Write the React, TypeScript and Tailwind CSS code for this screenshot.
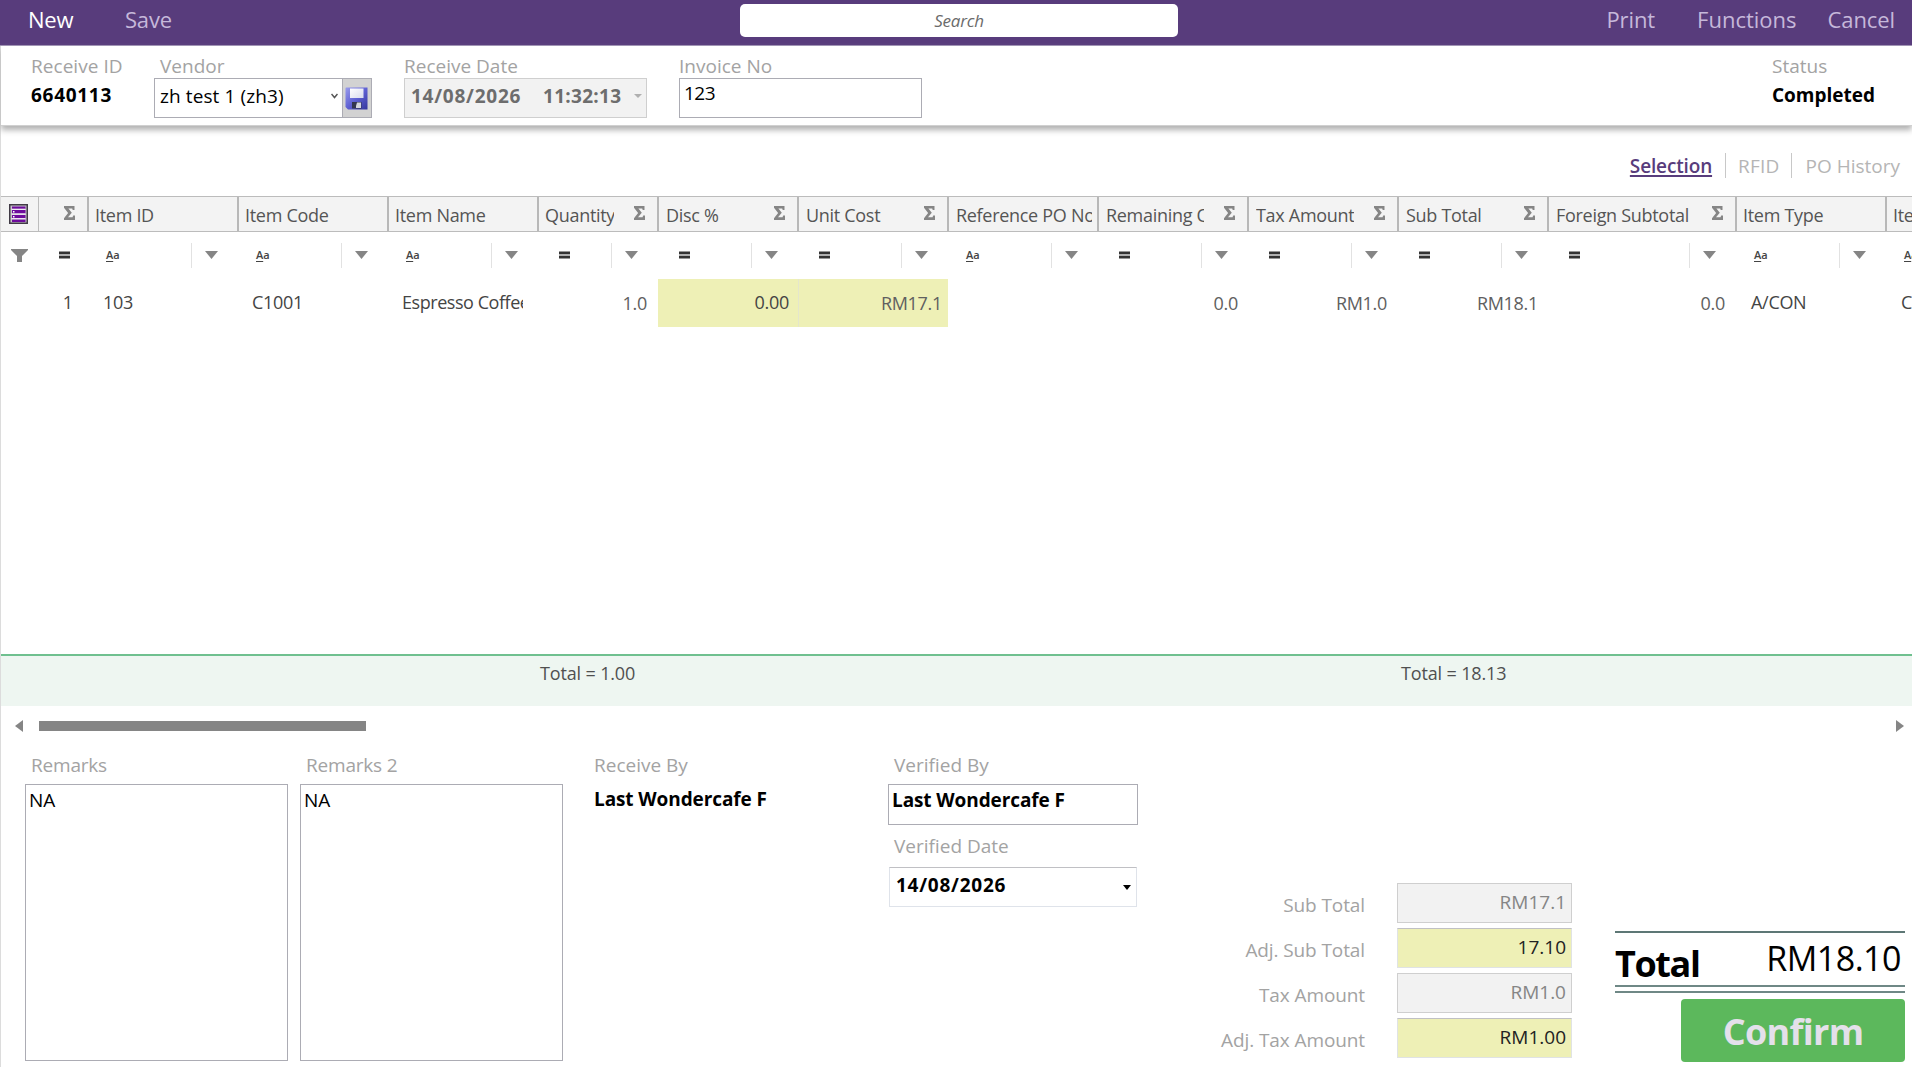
import clsx from "clsx";

type FilterKind = "text" | "number";

interface Column {
  title: string;
  width: string;
  filter: FilterKind;
  sum?: boolean;
  titleClass?: string;
  value?: string;
  valueClass?: string;
}

const columns: Column[] = [
  { title: "Item ID", width: "w-[150px]", filter: "text", titleClass: "pl-[6px]", value: "103", valueClass: "pl-[14px]" },
  { title: "Item Code", width: "w-[150px]", filter: "text", titleClass: "pl-[6px]", value: "C1001", valueClass: "pl-[13px]" },
  { title: "Item Name", width: "w-[150px]", filter: "text", titleClass: "pl-[6px]", value: "Espresso Coffee", valueClass: "pl-[13px] mr-[16px] tracking-[-0.45px]" },
  { title: "Quantity", width: "w-[120px]", filter: "number", sum: true, titleClass: "pl-[6px]", value: "1.0", valueClass: "justify-end pr-3 pt-px text-[#606060]" },
  { title: "Disc %", width: "w-[140px]", filter: "number", sum: true, value: "0.00", valueClass: "justify-end pr-[9px] -ml-px mr-px bg-[#eef0b6]" },
  { title: "Unit Cost", width: "w-[150px]", filter: "number", sum: true, value: "RM17.1", valueClass: "justify-end pr-[6px] pt-px -ml-px mr-px border-l border-[#e4e6cc] bg-[#eef0b6] text-[#606060]" },
  { title: "Reference PO No", width: "w-[150px]", filter: "text" },
  { title: "Remaining Qty", width: "w-[150px]", filter: "number", sum: true, value: "0.0", valueClass: "justify-end pr-[11px] pt-px text-[#606060]" },
  { title: "Tax Amount", width: "w-[150px]", filter: "number", sum: true, value: "RM1.0", valueClass: "justify-end pr-3 pt-px text-[#606060]" },
  { title: "Sub Total", width: "w-[150px]", filter: "number", sum: true, value: "RM18.1", valueClass: "justify-end pr-[11px] pt-px text-[#606060]" },
  { title: "Foreign Subtotal", width: "w-[188px]", filter: "number", sum: true, value: "0.0", valueClass: "justify-end pr-3 pt-px text-[#606060]" },
  { title: "Item Type", width: "w-[150px]", filter: "text", titleClass: "pl-[6px]", value: "A/CON", valueClass: "pl-[14px]" },
  { title: "Item Category", width: "w-[150px]", filter: "text", titleClass: "pl-[6px]", value: "Coffee", valueClass: "pl-[14px]" },
];

const amounts = [
  { label: "Sub Total", value: "RM17.1", editable: false },
  { label: "Adj. Sub Total", value: "17.10", editable: true },
  { label: "Tax Amount", value: "RM1.0", editable: false },
  { label: "Adj. Tax Amount", value: "RM1.00", editable: true },
];

function Sigma() {
  return (
    <svg className="w-[11px] h-[14px] shrink-0" viewBox="0 0 11 14" fill="#858585">
      <path d="M0 0H10.500V4H8.700L8.200 2.400H4.400L7.800 6.800L4 11.300H8.500L9.200 9.600H11V14H0V12.200L4.100 7.100L0 1.800z" />
    </svg>
  );
}

function EqualsIcon() {
  return (
    <svg className="w-[11px] h-[8px] shrink-0" viewBox="0 0 11 8">
      <path d="M0 3h11v2H0z" fill="#b0b0b0" />
      <path d="M0 .5h11v2.500H0zM0 5h11v2.500H0z" fill="#333" />
    </svg>
  );
}

function ChevronFill() {
  return (
    <svg className="w-[13px] h-[8px] shrink-0" viewBox="0 0 13 8">
      <path d="M0 0h13L6.500 8z" fill="#858585" />
    </svg>
  );
}

function FunnelIcon() {
  return (
    <svg className="w-[17px] h-[13px]" viewBox="0 0 17 13">
      <path d="M0 0h17v1L11 7v6H6V7L0 1z" fill="#858585" />
    </svg>
  );
}

function ChooserIcon() {
  return (
    <svg className="w-[19px] h-[20px]" viewBox="0 0 19 20">
      <path d="M.75.75h17.500v18.500H.75z" fill="#c9c4cd" stroke="#403a45" strokeWidth="1.500" />
      <path d="M3 2.500h13.500V5H3zM3 6h13.500v3.500H3zM3 11h13.500v3.500H3zM3 15.500h13.500V18H3z" fill="#6d0b9c" />
      <path d="M2.500 5.200h14M2.500 10h14M2.500 14.700h14" stroke="#fff" strokeWidth="1" />
      <path d="M4 7h1.500v1.500H4zM4 12h1.500v1.500H4z" fill="#fff" />
    </svg>
  );
}

function SaveIcon() {
  return (
    <svg className="w-[23px] h-[23px]" viewBox="0 0 23 23">
      <defs>
        <linearGradient id="disk" x1="0" y1="0" x2="1" y2="1">
          <stop offset="0" stopColor="#9a9cec" />
          <stop offset="0.5" stopColor="#5f61d3" />
          <stop offset="1" stopColor="#34369c" />
        </linearGradient>
        <linearGradient id="label" x1="0" y1="0" x2="1" y2="1">
          <stop offset="0" stopColor="#ffffff" />
          <stop offset="1" stopColor="#d9dcee" />
        </linearGradient>
      </defs>
      <path d="M1 .5h21.500v22H3L.5 20V1z" fill="url(#disk)" />
      <path d="M5 1.500h13.500V11H5z" fill="url(#label)" />
      <path d="M7 15h9.500v6.500H7z" fill="#33364e" />
      <path d="M12 15.500h4v5.500h-5v-2z" fill="#d4d6de" />
    </svg>
  );
}

function TopBar() {
  return (
    <header className="grid grid-cols-[740px_438px_1fr] h-[46px] bg-[#583c7c] border-b border-[#a093b5] text-[22px] leading-[39px] text-[#c6b8da]">
      <div className="flex items-start pl-7">
        <button className="w-[97px] text-left text-white tracking-[-0.2px]">New</button>
        <button className="tracking-[-0.2px]">Save</button>
      </div>
      <div className="mt-1 h-[33px] rounded-[5px] bg-white text-center text-[17px] leading-[33px] italic text-[#6b6b6b] tracking-[-0.2px]">
        Search
      </div>
      <div className="flex items-start justify-end pr-[17px] whitespace-nowrap">
        <button className="mr-[42px] tracking-[-0.1px]">Print</button>
        <button className="mr-[31px]">Functions</button>
        <button className="tracking-[-0.1px]">Cancel</button>
      </div>
    </header>
  );
}

function DetailsBar() {
  return (
    <section className="flex h-[80px] pt-[8px] pl-[30px] bg-white border-b border-[#d0d0d0] shadow-[0_4px_6px_#b0b0b0] text-[19px] leading-6 text-[#a3a3a3]">
      <div className="w-[123px]">
        <div className="tracking-[0.05px]">Receive ID</div>
        <div className="mt-[5px] font-bold text-black tracking-[0.7px]">6640113</div>
      </div>
      <div className="w-[250px]">
        <div className="pl-[6px]">Vendor</div>
        <div className="flex w-[218px] h-10 border border-[#acacb4] text-black">
          <div className="flex-1 flex items-center justify-between pl-[5px] pr-1 pb-1">
            <span className="tracking-[0.1px]">zh test 1 (zh3)</span>
            <svg className="w-[7px] h-[6px]" viewBox="0 0 7 6" fill="none" stroke="#555" strokeWidth="1.500">
              <path d="M.5 1L3.500 4.500L6.500 1" />
            </svg>
          </div>
          <div className="flex items-center justify-center w-[29px] pr-px border-l border-[#acacb4] bg-[#d2d2d2]">
            <SaveIcon />
          </div>
        </div>
      </div>
      <div className="w-[275px]">
        <div>Receive Date</div>
        <div className="flex items-center w-[243px] h-10 pl-[6px] pb-1 pr-1 border border-[#cfcfcf] bg-[#f2f2f2] font-bold text-[#6d6d6d]">
          <span className="w-[132px] tracking-[0.75px]">14/08/2026</span>
          <span className="w-[78px] overflow-hidden tracking-[0.3px]">11:32:13</span>
          <svg className="ml-auto w-2 h-1" viewBox="0 0 8 4">
            <path d="M0 0h8L4 4z" fill="#b0b0b0" />
          </svg>
        </div>
      </div>
      <div>
        <div>Invoice No</div>
        <div className="w-[243px] h-10 pl-1 pt-[2px] border border-[#acacb4] text-black tracking-[-0.5px]">123</div>
      </div>
      <div className="ml-auto w-[140px]">
        <div>Status</div>
        <div className="mt-[5px] font-bold text-black">Completed</div>
      </div>
    </section>
  );
}

function ViewTabs() {
  return (
    <nav className="flex justify-end items-center h-[70px] pt-[9px] pr-3 text-[19px] leading-6 text-[#b5b5b5] whitespace-nowrap">
      <a className="font-semibold text-[#583c7c] underline underline-offset-[2px] decoration-[1.5px] tracking-[-0.15px]">Selection</a>
      <span className="w-px h-[25px] ml-[13px] mr-3 bg-[#c8c8c8]" />
      <a className="tracking-[0.2px]">RFID</a>
      <span className="w-px h-[25px] ml-[11px] mr-[14px] bg-[#c8c8c8]" />
      <a>PO History</a>
    </nav>
  );
}

function FilterCell({ kind }: { kind: FilterKind }) {
  return (
    <div className="flex items-center h-full pl-[17px] pr-[21px] pb-px">
      {kind === "text" ? (
        <span className="text-[11px] leading-4 font-semibold tracking-[-0.1px] text-[#444]">
          <u className="underline-offset-2">A</u>a
        </span>
      ) : (
        <span className="pl-[3px]"><EqualsIcon /></span>
      )}
      <span className="ml-auto mr-[13px] w-px h-[25px] bg-[#e2e2e2]" />
      <ChevronFill />
    </div>
  );
}

function ItemsGrid() {
  return (
    <section className="text-[18px] text-[#444]">
      <div className="overflow-hidden">
        <div className="flex w-[2037px] h-[36px] border-y border-[#bcbcbc] bg-[#f3f3f3] leading-[37px] text-[#555]">
          <div className="flex items-center w-[38px] pb-px pl-2 border-r border-[#bcbcbc]"><ChooserIcon /></div>
          <div className="flex items-center justify-end w-[50px] pr-[12px] pb-[3px] border-r-2 border-[#b8b8b8]"><Sigma /></div>
          {columns.map((col) => (
            <div
              key={col.title}
              className={clsx(
                "flex items-center border-r-2 border-[#b8b8b8] whitespace-nowrap",
                col.width,
                col.titleClass ?? "pl-[7px]",
                col.sum ? "pr-3" : "pr-[5px]"
              )}
            >
              <span className={clsx("flex-1 min-w-0 overflow-hidden h-[34px] tracking-[-0.3px]", col.sum && "mr-5")}>{col.title}</span>
              {col.sum && <span className="pb-[3px]"><Sigma /></span>}
            </div>
          ))}
        </div>
        <div className="flex w-[2037px] h-[47px]">
          <div className="flex items-center w-[58px] pl-[10px] pb-px"><FunnelIcon /></div>
          <div className="flex items-center w-[30px] pb-px"><EqualsIcon /></div>
          {columns.map((col) => (
            <div key={col.title} className={col.width}>
              <FilterCell kind={col.filter} />
            </div>
          ))}
        </div>
        <div className="flex w-[2037px] h-12">
          <div className="w-[88px] pr-[16px] text-right leading-[47px]">1</div>
          {columns.map((col) => (
            <div key={col.title} className={clsx("flex", col.width)}>
              <div className={clsx("flex flex-1 min-w-0 overflow-hidden leading-[47px] whitespace-nowrap tracking-[-0.3px]", col.valueClass)}>
                {col.value}
              </div>
            </div>
          ))}
        </div>
      </div>
      <div className="h-[327px]" />
      <div className="flex h-[52px] border-t-2 border-[#6fc08f] bg-[#eef6f1] pt-[3px] leading-7 text-[#505050] tracking-[-0.15px]">
        <div className="w-[860px] pl-[539px]">Total = 1.00</div>
        <div className="pl-[540px]">Total = 18.13</div>
      </div>
      <div className="flex items-center h-[39px] pl-[14px] pr-2">
        <svg className="w-2 h-3" viewBox="0 0 8 12"><path d="M8 0v12L0 6z" fill="#858585" /></svg>
        <div className="ml-4 w-[327px] h-[10px] bg-[#858585]" />
        <svg className="ml-auto w-2 h-3" viewBox="0 0 8 12"><path d="M0 0v12L8 6z" fill="#858585" /></svg>
      </div>
    </section>
  );
}

function Remarks({ label, className }: { label: string; className?: string }) {
  return (
    <div className={className}>
      <div className="pl-[6px] h-[31px] tracking-[-0.2px]">{label}</div>
      <div className="w-[263px] h-[277px] pl-[3px] pt-[3px] border border-[#acacb4] text-black tracking-[-0.1px]">NA</div>
    </div>
  );
}

function GrandTotal() {
  return (
    <div className="flex flex-col items-end pt-[178px] w-[290px]">
      <div className="flex justify-between w-full h-[54px] border-t-2 border-[#5d7775] text-black whitespace-nowrap">
        <span className="pt-[8px] text-[36px] leading-[46px] font-bold tracking-[-1.400px]">Total</span>
        <span className="pt-[2px] pr-1 text-[34px] leading-[46px] tracking-[-0.5px]">RM18.10</span>
      </div>
      <div className="w-full h-2 border-y-2 border-[#6f8886]" />
      <button className="mt-[6px] w-[224px] h-[63px] rounded-[4px] bg-[#5cb85c] text-[36px] leading-[65px] font-bold tracking-[-0.7px] text-[#e4e0ea]">
        Confirm
      </button>
    </div>
  );
}

function Footer() {
  return (
    <section className="flex flex-1 pt-[8px] pl-6 text-[19px] leading-6 text-[#a3a3a3]">
      <Remarks label="Remarks" className="w-[275px]" />
      <Remarks label="Remarks 2" className="w-[294px]" />
      <div className="w-[294px]">
        <div>Receive By</div>
        <div className="mt-[10px] font-bold text-black tracking-[-0.1px]">Last Wondercafe F</div>
      </div>
      <div className="w-[285px]">
        <div className="pl-[6px] h-[31px]">Verified By</div>
        <div className="w-[250px] h-[41px] pl-[3px] pt-[3px] border border-[#acacb4] font-bold text-black tracking-[-0.1px]">Last Wondercafe F</div>
        <div className="pl-[6px] mt-[9px] h-[33px]">Verified Date</div>
        <div className="flex items-center justify-between ml-px w-[248px] h-10 pl-[6px] pr-[5px] pb-1 border border-[#dfe3ea] border-t-[#c0c0c4] font-bold text-black tracking-[0.75px]">
          14/08/2026
          <svg className="mt-1 w-2 h-[5px]" viewBox="0 0 8 5"><path d="M0 0h8L4 5z" fill="#000" /></svg>
        </div>
      </div>
      <div className="flex flex-col gap-[5px] w-[399px] pt-[130px]">
        {amounts.map((row) => (
          <div key={row.label} className="flex justify-end">
            <div className="pt-[10px] mr-8 tracking-[-0.1px]">{row.label}</div>
            <div
              className={clsx(
                "w-[175px] h-10 pr-[5px] pt-[6px] text-right border",
                row.editable
                  ? "bg-[#eef0b6] border-[#e0e3e4] border-t-[#c0c0c4] text-[#222]"
                  : "bg-[#f2f2f2] border-[#cfcfcf] text-[#858585]"
              )}
            >
              {row.value}
            </div>
          </div>
        ))}
      </div>
      <div className="ml-[43px]">
        <GrandTotal />
      </div>
    </section>
  );
}

export default function App() {
  return (
    <div className="flex flex-col w-[1912px] h-[1067px] overflow-hidden bg-white font-['Open_Sans','Noto_Sans',sans-serif]">
      <TopBar />
      <main className="flex flex-col flex-1 border-l border-[#dcdcdc]">
        <DetailsBar />
        <ViewTabs />
        <ItemsGrid />
        <Footer />
      </main>
    </div>
  );
}
